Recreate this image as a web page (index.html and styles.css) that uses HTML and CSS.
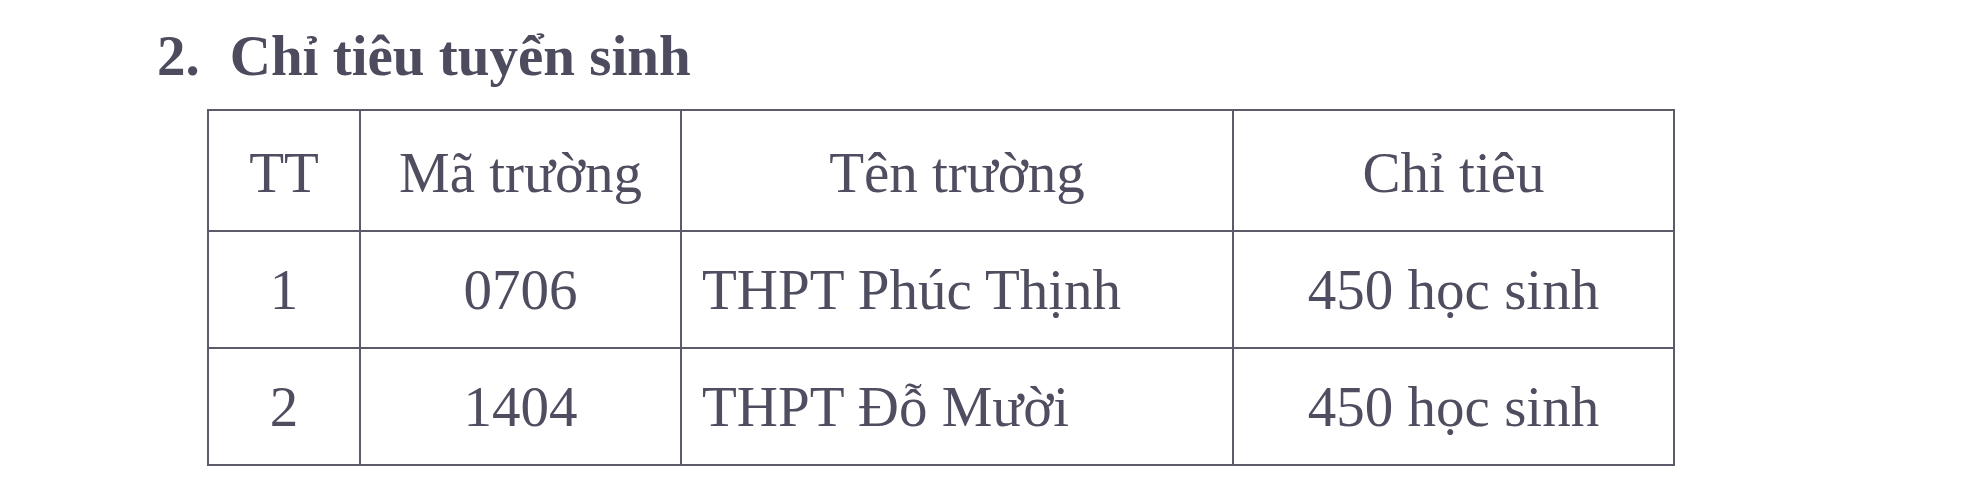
FILE: index.html
```html
<!DOCTYPE html>
<html lang="vi">
<head>
<meta charset="utf-8">
<title>Chỉ tiêu tuyển sinh</title>
<link rel="stylesheet" href="styles.css">
</head>
<body>
<div class="page">
  <h2 class="section-title"><span class="num">2.</span><span class="label">Chỉ tiêu tuyển sinh</span></h2>
  <table class="quota">
    <colgroup>
      <col class="c-tt">
      <col class="c-code">
      <col class="c-name">
      <col class="c-quota">
    </colgroup>
    <thead>
      <tr>
        <th>TT</th>
        <th>Mã trường</th>
        <th>Tên trường</th>
        <th>Chỉ tiêu</th>
      </tr>
    </thead>
    <tbody>
      <tr>
        <td>1</td>
        <td>0706</td>
        <td class="name">THPT Phúc Thịnh</td>
        <td>450 học sinh</td>
      </tr>
      <tr>
        <td>2</td>
        <td>1404</td>
        <td class="name">THPT Đỗ Mười</td>
        <td>450 học sinh</td>
      </tr>
    </tbody>
  </table>
</div>
</body>
</html>
```
FILE: styles.css
```css
html, body {
  margin: 0;
  padding: 0;
  background: #ffffff;
}

body {
  font-family: "Liberation Serif", "Times New Roman", serif;
  color: #4f4e60;
}

.page {
  padding: 27px 0 0 157px;
}

.section-title {
  margin: 0;
  font-size: 57px;
  line-height: 57px;
  font-weight: bold;
  color: #4d4c5e;
}

.section-title .num {
  margin-right: 30px;
}

.quota {
  margin: 25px 0 0 50px;
  border-collapse: collapse;
  table-layout: fixed;
  width: 1466px;
  font-size: 57px;
}

.c-tt { width: 152px; }
.c-code { width: 321px; }
.c-name { width: 552px; }
.c-quota { width: 441px; }

.quota th,
.quota td {
  border: 2px solid #5c5b6a;
  height: 115px;
  padding: 0;
  text-align: center;
  vertical-align: middle;
  font-weight: normal;
  white-space: nowrap;
}

.quota th {
  padding-top: 4px;
  padding-bottom: 0;
}

.quota td.name {
  text-align: left;
  padding-left: 20px;
}
```
